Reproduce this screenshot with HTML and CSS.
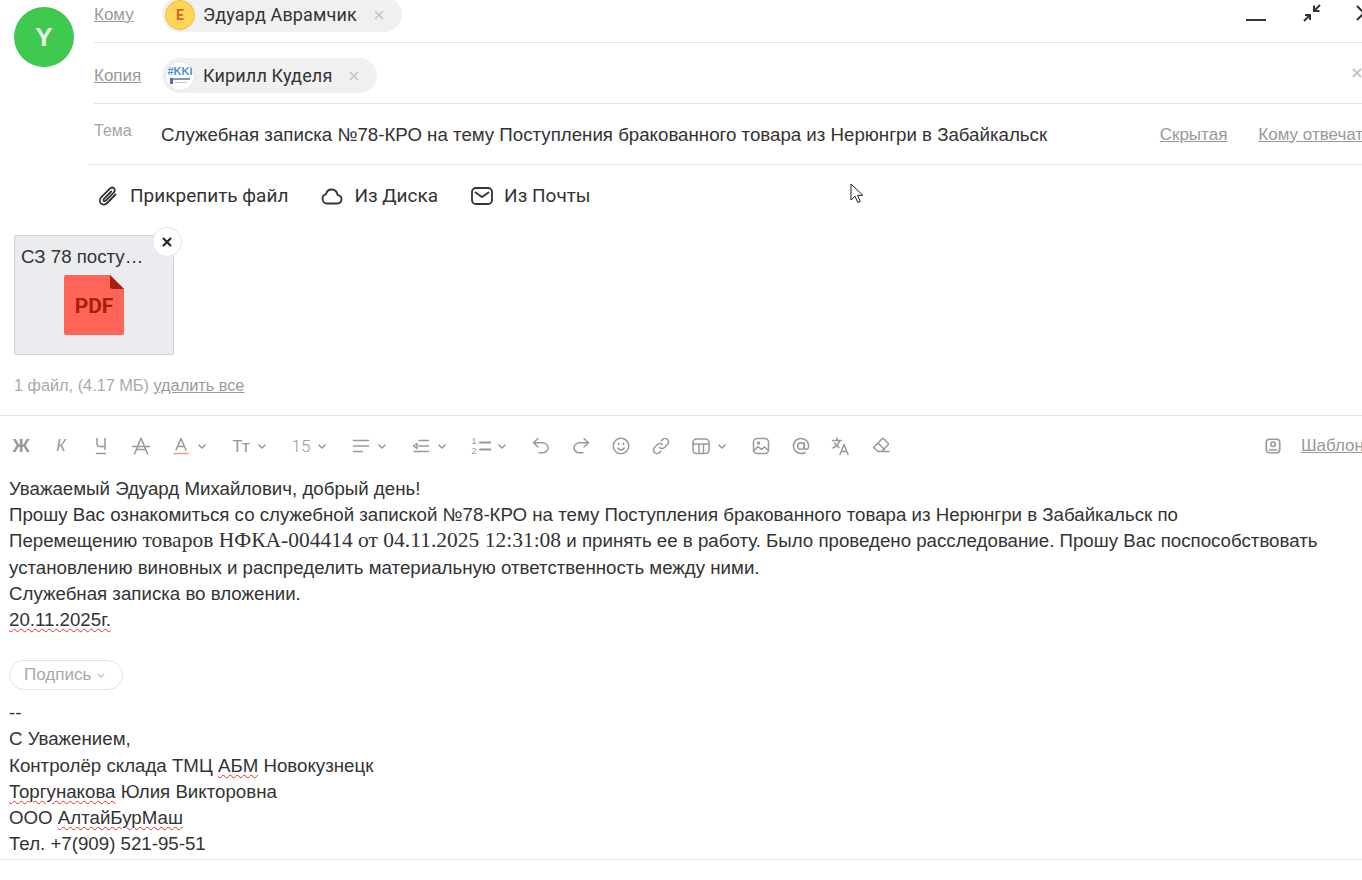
FILE: index.html
```html
<!DOCTYPE html>
<html lang="ru">
<head>
<meta charset="utf-8">
<title>Письмо</title>
<link rel="stylesheet" href="styles.css">
</head>
<body>
<div class="compose">
  <header class="head">
    <div class="avatar">Y</div>
    <div class="fields">
      <div class="row">
        <a class="label link">Кому</a>
        <span class="chip">
          <span class="chip-pic chip-pic-e">Е</span>
          <span class="chip-name">Эдуард Аврамчик</span>
          <svg class="chip-x" viewBox="0 0 10 10"><path d="M1 1l8 8M9 1l-8 8"/></svg>
        </span>
        <div class="win">
          <svg class="win-min" viewBox="0 0 20 4"><path d="M0 2h20"/></svg>
          <svg class="win-col" viewBox="0 0 18 18"><path d="M17 1l-5.500 5.500M11 1.500V7h5.500M1 17l5.500-5.500M2 11h5v5"/></svg>
          <svg class="win-close" viewBox="0 0 16 16"><path d="M1 1l14 14M15 1L1 15"/></svg>
        </div>
      </div>
      <div class="row">
        <a class="label link">Копия</a>
        <span class="chip">
          <span class="chip-pic chip-pic-k">
            <svg viewBox="0 0 28 28"><rect x="6" y="16" width="18" height="2" fill="#8a9aa8"/><rect x="4" y="16" width="3" height="6" fill="#5b62c9"/><rect x="9" y="20" width="12" height="1" fill="#c5ccd3"/></svg>
            <span class="kki">#KKI</span>
          </span>
          <span class="chip-name">Кирилл Куделя</span>
          <svg class="chip-x" viewBox="0 0 10 10"><path d="M1 1l8 8M9 1l-8 8"/></svg>
        </span>
        <svg class="clear-x" viewBox="0 0 10 10"><path d="M1 1l8 8M9 1l-8 8"/></svg>
      </div>
      <div class="row row-subject">
        <span class="label">Тема</span>
        <span class="subject">Служебная записка №78-КРО на тему Поступления бракованного товара из Нерюнгри в Забайкальск</span>
        <div class="subject-links">
          <a class="link small">Скрытая</a>
          <a class="link small">Кому отвечать</a>
        </div>
      </div>
    </div>
  </header>

  <div class="attach-bar">
    <span class="attach-btn attach-btn-clip">
      <svg viewBox="0 0 24 24"><path d="M19.500 10.500l-8.300 8.500c-1.900 1.900-4.700 2-6.300.4s-1.400-4.300.5-6.200l8.400-8.500c1.300-1.300 3.100-1.400 4.200-.3s1 2.900-.3 4.200l-7.900 8c-.6.6-1.500.7-2 .2s-.4-1.400.2-2l7.200-7.300"/></svg>
      Прикрепить файл
    </span>
    <span class="attach-btn attach-btn-cloud">
      <svg viewBox="0 0 24 24"><path d="M7 19.500h10.200c2.600 0 4.300-1.800 4.300-4.200 0-2.300-1.700-4-3.900-4.200C17 7.800 14.700 5.500 11.700 5.500c-2.900 0-5.100 2-5.600 4.700-2.200.6-3.600 2.400-3.600 4.600 0 2.700 2 4.700 4.500 4.700z"/></svg>
      Из Диска
    </span>
    <span class="attach-btn attach-btn-mail">
      <svg viewBox="0 0 24 24"><rect x="2" y="4" width="20" height="16" rx="4"/><path d="M5.500 8.500L12 13l6.500-4.500"/></svg>
      Из Почты
    </span>
  </div>

  <div class="files">
    <div class="file">
      <div class="file-name">СЗ 78 посту…</div>
      <svg class="pdf" viewBox="0 0 60 60">
        <path d="M2 0h44l14 14v44a2 2 0 0 1-2 2H2a2 2 0 0 1-2-2V2a2 2 0 0 1 2-2z" fill="#ff6557"/>
        <path d="M46 0l14 14H49a3 3 0 0 1-3-3z" fill="#a81e10"/>
        <text x="30" y="38" class="pdf-text" text-anchor="middle">PDF</text>
      </svg>
      <span class="file-x">
        <svg viewBox="0 0 10 10"><path d="M1 1l8 8M9 1l-8 8"/></svg>
      </span>
    </div>
    <div class="files-info">1 файл, (4.17 МБ) <a class="files-del">удалить все</a></div>
  </div>

  <div class="toolbar">
    <span class="tb tb-text tb-b">Ж</span>
    <span class="tb tb-text tb-i">К</span>
    <span class="tb"><svg viewBox="0 0 20 20"><path d="M6 2.500v5c0 2 1 3 2.500 3H14M14 2.500v11M5.500 17.500h9"/></svg></span>
    <span class="tb"><svg viewBox="0 0 20 20"><path d="M3.500 18L10 2l6.500 16M1.500 10.500h17M5.500 13.500h9"/></svg></span>
    <span class="tb tb-dd"><span class="tb-ic"><svg viewBox="0 0 20 20"><path d="M5 14L10 2.500 15 14M6.500 10.500h7"/><path class="orange" d="M3 17.500h14"/></svg></span><svg class="chev" viewBox="0 0 8 5"><path d="M1 1l3 3 3-3"/></svg></span>
    <span class="tb tb-dd"><span class="tb-ic tb-tt">Тт</span><svg class="chev" viewBox="0 0 8 5"><path d="M1 1l3 3 3-3"/></svg></span>
    <span class="tb tb-dd"><span class="tb-ic tb-size">15</span><svg class="chev" viewBox="0 0 8 5"><path d="M1 1l3 3 3-3"/></svg></span>
    <span class="tb tb-dd"><span class="tb-ic"><svg viewBox="0 0 20 20"><path d="M2.500 4.500h15M2.500 10h15M2.500 15.500h9"/></svg></span><svg class="chev" viewBox="0 0 8 5"><path d="M1 1l3 3 3-3"/></svg></span>
    <span class="tb tb-dd"><span class="tb-ic"><svg viewBox="0 0 20 20"><path d="M8 4.500h9.500M8 10h9.500M3 15.500h14.500M6 7.500L2.500 10 6 12.500z"/></svg></span><svg class="chev" viewBox="0 0 8 5"><path d="M1 1l3 3 3-3"/></svg></span>
    <span class="tb tb-dd"><span class="tb-ic tb-list"><span class="nums"><span>1</span><span>2</span></span><svg viewBox="0 0 12 14"><path d="M1 3.500h11M1 10.500h11"/></svg></span><svg class="chev" viewBox="0 0 8 5"><path d="M1 1l3 3 3-3"/></svg></span>
    <span class="tb"><svg viewBox="0 0 20 20"><path d="M7 2.500L2.500 6.800 7 11M3 6.800h8.500c3 0 5.500 2.200 5.500 5s-2.500 5-5.500 5H8"/></svg></span>
    <span class="tb"><svg viewBox="0 0 20 20"><path d="M13 2.500l4.500 4.300L13 11M17 6.800H8.500c-3 0-5.500 2.200-5.500 5s2.500 5 5.500 5H12"/></svg></span>
    <span class="tb"><svg viewBox="0 0 20 20"><circle cx="10" cy="10" r="7.700"/><path d="M6.800 12c.8 1.300 2 2 3.200 2s2.400-.7 3.200-2"/><path d="M7.500 7.300v1.200M12.500 7.300v1.200"/></svg></span>
    <span class="tb"><svg viewBox="0 0 20 20"><path d="M8.500 11.500a3.500 3.500 0 0 0 5 0l3-3a3.500 3.500 0 0 0-5-5l-1.300 1.300"/><path d="M11.500 8.500a3.500 3.500 0 0 0-5 0l-3 3a3.500 3.500 0 0 0 5 5l1.300-1.300"/></svg></span>
    <span class="tb tb-dd"><span class="tb-ic"><svg viewBox="0 0 20 20"><rect x="2" y="3" width="16" height="14.500" rx="3.500"/><path d="M2 8h16M8 8v9.500M12.500 8v9.500"/></svg></span><svg class="chev" viewBox="0 0 8 5"><path d="M1 1l3 3 3-3"/></svg></span>
    <span class="tb"><svg viewBox="0 0 20 20"><rect x="2.500" y="2.500" width="15" height="15" rx="3.500"/><path d="M3 14.500l4-4 3.500 3 3-2.500 3.500 3"/><circle cx="7.500" cy="7" r="1"/></svg></span>
    <span class="tb"><svg viewBox="0 0 20 20"><circle cx="10" cy="10" r="3.300"/><path d="M13.300 6.700v4.500c0 1.300.9 2.100 2 2.100s2.300-1 2.300-3.300c0-4.300-3.400-7.600-7.600-7.600S2.400 5.800 2.400 10s3.400 7.600 7.600 7.600c1.500 0 2.800-.4 4-1.100"/></svg></span>
    <span class="tb"><svg viewBox="0 0 20 20"><path d="M1.500 4.500h9M6 2v2.500M8.500 4.500c-.7 3.500-3 6-6.500 7.500M3.500 7c1 2 2.500 3.500 4.500 4.500M9 18.500l4-10 4 10M10.300 15.500h5.500"/></svg></span>
    <span class="tb"><svg viewBox="0 0 20 20"><path d="M2.500 11.500l8.500-8.500a1.500 1.500 0 0 1 2 0l4 4a1.500 1.500 0 0 1 0 2l-6.500 6.500H7zM7 7l6.500 6.500M7 15.500h11"/></svg></span>
    <span class="tb-right">
      <svg class="tb-person" viewBox="0 0 20 20"><rect x="2.500" y="2.500" width="15" height="15" rx="3.500"/><circle cx="10" cy="8" r="2.500"/><path d="M6 14.500h8"/></svg>
      <a class="link small">Шаблоны</a>
    </span>
  </div>

  <div class="body">
    <div class="text">
      <div>Уважаемый Эдуард Михайлович, добрый день!</div>
      <div>Прошу Вас ознакомиться со служебной запиской №78-КРО на тему Поступления бракованного товара из Нерюнгри в Забайкальск по</div>
      <div>Перемещению <span class="serif">товаров НФКА-004414 от 04.11.2025 12:31:08</span> и принять ее в работу. Было проведено расследование. Прошу Вас поспособствовать</div>
      <div>установлению виновных и распределить материальную ответственность между ними.</div>
      <div>Служебная записка во вложении.</div>
      <div><span class="typo">20.11.2025г.</span></div>
    </div>
    <span class="sign-btn">Подпись <svg class="chev" viewBox="0 0 8 5"><path d="M1 1l3 3 3-3"/></svg></span>
    <div class="text">
      <div>--</div>
      <div>С Уважением,</div>
      <div>Контролёр склада ТМЦ <span class="typo">АБМ</span> Новокузнецк</div>
      <div><span class="typo">Торгунакова</span> Юлия Викторовна</div>
      <div>ООО <span class="typo">АлтайБурМаш</span></div>
      <div>Тел. +7(909) 521-95-51</div>
    </div>
  </div>
  <svg class="cursor" viewBox="0 0 14 21"><path d="M1 1v16l4-3.800 2.800 6.300 2.500-1.100-2.800-6.100h5.300z"/></svg>
</div>
</body>
</html>
```

FILE: styles.css
```css
* { box-sizing: border-box; }
html, body { margin: 0; height: 880px; overflow: hidden; background: #fff; }
body { font-family: "Liberation Sans", Arial, sans-serif; color: #333; }

.compose { position: relative; width: 1372px; margin-top: -18px; }

.head { display: flex; }
.avatar {
  flex: none; width: 60px; height: 60px; margin: 25px 0 0 14px;
  border-radius: 50%; background: #40c94f; color: #e9fbe6;
  font: 700 26px/60px "Liberation Sans", sans-serif; text-align: center;
}
.fields { flex: 1; margin-left: 15px; min-width: 0; }
.row {
  display: flex; align-items: center; height: 61px;
  margin-left: 5px; border-bottom: 1px solid #e3e3e3;
}
.row-subject { margin-left: 0; padding-left: 5px; }

.label { flex: none; width: 68px; margin-top: 6px; font-size: 17px; color: #a3a3a3; }
.row-subject .label { margin-top: -7px; font-size: 16px; }
.link { color: #999; text-decoration: underline; }
.small { font-size: 17px; white-space: nowrap; }

.chip {
  display: inline-flex; align-items: center; height: 35px; padding: 0 18px 0 3px;
  border-radius: 18px; background: #f0f0f0; margin-top: 5px;
}
.chip-pic {
  position: relative; flex: none; width: 30px; height: 30px; border-radius: 50%;
  overflow: hidden; display: flex; align-items: center; justify-content: center;
}
.chip-pic-e {
  background: #ffd555; border: 1px solid #eeb94a; color: #d0682a;
  font: 700 14px "Roboto", sans-serif;
}
.chip-pic-k { background: #fff; border: 1px solid #e5e5e5; }
.chip-pic-k svg { position: absolute; inset: 0; width: 100%; height: 100%; }
.kki {
  position: absolute; top: 3px; left: -1px; right: -1px; text-align: center;
  font: 700 11px/12px "Liberation Sans", sans-serif; color: #4a90d9;
}
.chip-name { margin-left: 8px; font: 400 18px "Roboto", sans-serif; color: #333; letter-spacing: .15px; }
.chip-x { width: 10px; height: 10px; margin-left: 17px; fill: none; stroke: #c4c4c4; stroke-width: 1.700; }

.win { margin-left: auto; display: flex; align-items: center; height: 30px; margin-top: 1px; }
.win svg { flex: none; fill: none; stroke: #333; stroke-width: 2; }
.win-min { width: 20px; height: 4px; margin-top: 14px; }
.win-col { width: 18px; height: 18px; margin-left: 37px; }
.win-close { width: 16px; height: 16px; margin-left: 35px; }

.clear-x { width: 10px; height: 10px; margin-left: auto; margin-right: 10px; margin-top: -1px; fill: none; stroke: #c4c4c4; stroke-width: 1.800; }

.subject { flex: 1; margin-left: -1px; margin-top: 1px; font-size: 18.700px; color: #333; white-space: nowrap; }
.subject-links { flex: none; display: flex; gap: 31px; margin-top: 1px; }

.attach-bar { display: flex; align-items: center; height: 61px; padding-left: 96px; }
.attach-btn {
  display: inline-flex; align-items: center; gap: 10px;
  font: 400 19px "Roboto", sans-serif; color: #333;
}
.attach-btn svg { width: 24px; height: 24px; fill: none; stroke: #333; stroke-width: 1.800; stroke-linecap: round; stroke-linejoin: round; }
.attach-btn-cloud { margin-left: 32px; }
.attach-btn-mail { margin-left: 32px; }

.files { padding: 9px 0 0 14px; height: 189px; }
.file {
  position: relative; width: 160px; height: 120px; padding: 10px 6px 0;
  background: #ebecf0; border: 1px solid #cfd0d4; border-radius: 2px;
}
.file-name { font-size: 18.700px; line-height: 22px; color: #333; white-space: nowrap; }
.pdf { display: block; width: 60px; height: 60px; margin: 7px 0 0 43px; }
.pdf-text { font: 700 21px "Roboto", sans-serif; fill: #a81e10; }
.file-x {
  position: absolute; top: -9px; right: -9px; width: 30px; height: 30px;
  border-radius: 50%; background: #fff; border: 1px solid #e2e2e2;
  display: flex; align-items: center; justify-content: center;
}
.file-x svg { width: 10px; height: 10px; fill: none; stroke: #222; stroke-width: 2.200; }
.files-info { margin-top: 21px; font-size: 16.300px; color: #aaa; }
.files-del { color: #999; text-decoration: underline; }

.toolbar {
  display: flex; align-items: center; height: 61px; padding: 0 1px;
  border-top: 1px solid #e3e3e3;
}
.tb { flex: none; width: 40px; height: 24px; display: flex; align-items: center; justify-content: center; color: #999; }
.tb svg { width: 20px; height: 20px; fill: none; stroke: #999; stroke-width: 1.500; stroke-linecap: round; stroke-linejoin: round; }
.tb-dd { width: 60px; justify-content: flex-start; }
.tb-ic { flex: none; width: 40px; display: flex; align-items: center; justify-content: center; }
.tb-dd .chev { margin-left: -3px; }
.chev { width: 8px; height: 5px; fill: none; stroke: #999; stroke-width: 1.500; }
.tb svg.chev { width: 8px; height: 5px; }
.orange { stroke: #f4a083 !important; }
.tb-text { font-size: 17px; }
.tb-b { font-weight: 700; font-size: 19px; }
.tb-i { font-style: italic; font-size: 16px; }
.tb-tt { font: 400 17px "Roboto", sans-serif; }
.tb-size { font: 300 17px "Roboto", sans-serif; }
.tb-list { gap: 2px; }
.tb-list svg { width: 12px; height: 14px; stroke-width: 2; }
.nums { display: flex; flex-direction: column; font-size: 9px; line-height: 10px; color: #999; }
.tb-right { margin-left: auto; display: flex; align-items: center; gap: 19px; width: 107px; flex: none; }
.tb-person { width: 18px; height: 18px; fill: none; stroke: #999; stroke-width: 1.800; stroke-linecap: round; flex: none; }

.body { padding: 0 0 0 9px; height: 384px; border-bottom: 1px solid #e3e3e3; }
.text { font-size: 18.700px; line-height: 26.200px; color: #333; white-space: nowrap; }
.serif { font-family: "Liberation Serif", serif; font-size: 21.500px; line-height: 20px; }
.typo { text-decoration: underline wavy #e33030 1.300px; text-underline-offset: 2px; }
.sign-btn {
  display: inline-flex; align-items: center; gap: 6px; width: 114px; height: 30px;
  margin: 27px 0 10px; padding-left: 14px;
  border: 1px solid #e2e2e2; border-radius: 15px; font-size: 17px; color: #a8a8a8;
}
.sign-btn .chev { stroke: #c4c4c4; }

.cursor { position: absolute; left: 850px; top: 201px; width: 14px; height: 21px; fill: #fff; stroke: #222; stroke-width: 1; }
```
